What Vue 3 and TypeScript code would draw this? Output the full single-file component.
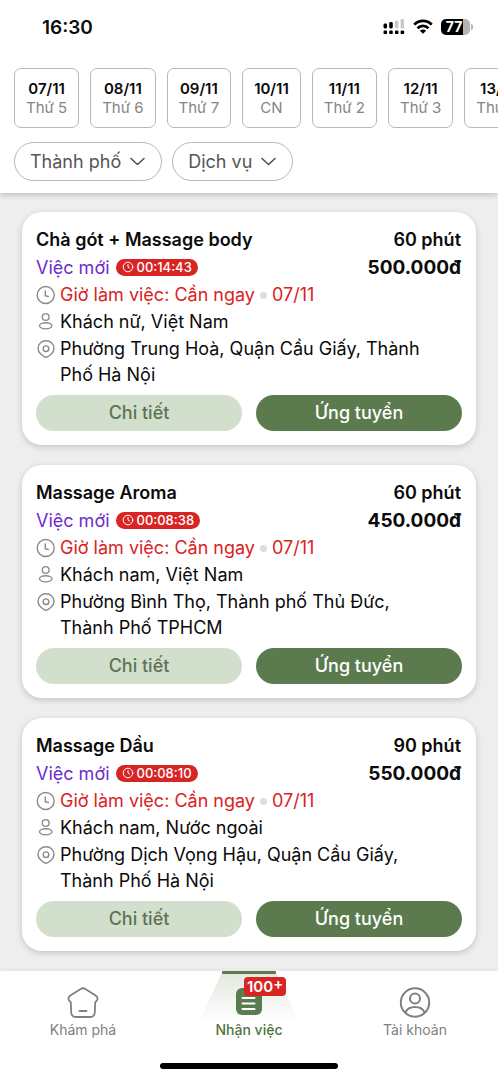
<script setup lang="ts">
interface Day { date: string; label: string }
interface Job {
  title: string
  minutes: string
  price: string
  timer: string
  date: string
  customer: string
  address: string
}

const days: Day[] = [
  { date: '07/11', label: 'Thứ 5' },
  { date: '08/11', label: 'Thứ 6' },
  { date: '09/11', label: 'Thứ 7' },
  { date: '10/11', label: 'CN' },
  { date: '11/11', label: 'Thứ 2' },
  { date: '12/11', label: 'Thứ 3' },
  { date: '13/11', label: 'Thứ 4' },
]

const filters: string[] = ['Thành phố', 'Dịch vụ']

const jobs: Job[] = [
  {
    title: 'Chà gót + Massage body', minutes: '60 phút', price: '500.000đ', timer: '00:14:43', date: '07/11',
    customer: 'Khách nữ, Việt Nam', address: 'Phường Trung Hoà, Quận Cầu Giấy, Thành Phố Hà Nội',
  },
  {
    title: 'Massage Aroma', minutes: '60 phút', price: '450.000đ', timer: '00:08:38', date: '07/11',
    customer: 'Khách nam, Việt Nam', address: 'Phường Bình Thọ, Thành phố Thủ Đức, Thành Phố TPHCM',
  },
  {
    title: 'Massage Dầu', minutes: '90 phút', price: '550.000đ', timer: '00:08:10', date: '07/11',
    customer: 'Khách nam, Nước ngoài', address: 'Phường Dịch Vọng Hậu, Quận Cầu Giấy, Thành Phố Hà Nội',
  },
]
</script>

<template>
  <div class="app">
    <header class="top">
      <div class="status">
        <span class="clock">16:30</span>
        <div class="indicators">
          <svg width="22" height="16" viewBox="0 0 22 16" aria-hidden="true">
            <g fill="#000">
              <rect x="0.5" y="4.5" width="3.6" height="5" rx="1.4" />
              <rect x="6.2" y="3" width="3.6" height="6.5" rx="1.4" />
              <rect x="0.5" y="11.5" width="3.6" height="3.6" rx="1.2" />
              <rect x="6.2" y="11.5" width="3.6" height="3.6" rx="1.2" />
              <rect x="11.9" y="11.5" width="3.6" height="3.6" rx="1.2" />
              <rect x="17.6" y="11.5" width="3.6" height="3.6" rx="1.2" />
            </g>
            <g fill="#c8c8c8">
              <rect x="11.9" y="1.5" width="3.4" height="8" rx="1.2" />
              <rect x="17.6" y="0" width="3.4" height="9.5" rx="1.2" />
            </g>
          </svg>
          <svg width="20" height="16" viewBox="0 0 20 16" aria-hidden="true">
            <g fill="none" stroke="#000" stroke-width="2.7">
              <path d="M1.2 5.6C6.2 .6 13.8 .6 18.8 5.6" />
              <path d="M4.5 9.2C7.7 6.1 12.3 6.1 15.5 9.2" />
            </g>
            <path d="M10 14.8L6.900 11.700C8.700 10 11.300 10 13.100 11.700Z" fill="#000" />
          </svg>
          <div class="battery"><span>77</span></div>
        </div>
      </div>
      <div class="days">
        <button v-for="d in days" :key="d.date" type="button" class="day">
          <strong>{{ d.date }}</strong>
          <span>{{ d.label }}</span>
        </button>
      </div>
      <div class="filters">
        <button v-for="f in filters" :key="f" type="button" class="filter">
          {{ f }}
          <svg width="15" height="9" viewBox="0 0 15 9" aria-hidden="true">
            <path d="M1 1.5L7.5 7.500L14 1.500" fill="none" stroke="#4c4c4c" stroke-width="1.5" stroke-linecap="round" stroke-linejoin="round" />
          </svg>
        </button>
      </div>
    </header>

    <main class="list">
      <article v-for="j in jobs" :key="j.title" class="card">
        <div class="head">
          <h2>{{ j.title }}</h2>
          <span class="minutes">{{ j.minutes }}</span>
        </div>
        <div class="head">
          <div class="state">
            <span class="fresh">Việc mới</span>
            <span class="timer">
              <svg width="12" height="12" viewBox="0 0 12 12" aria-hidden="true">
                <g fill="none" stroke="#fff" stroke-linecap="round"><circle cx="6" cy="6" r="4.8" /><path d="M6 3.5V6L7.500 7" /></g>
              </svg>
              {{ j.timer }}
            </span>
          </div>
          <span class="price">{{ j.price }}</span>
        </div>
        <div class="info">
          <div class="row urgent">
            <svg class="icon" viewBox="0 0 20 20" aria-hidden="true">
              <circle cx="9.7" cy="10" r="8.5" /><path d="M9.3 6V10.800L12.300 11.500" />
            </svg>
            <span>Giờ làm việc: Cần ngay</span><i class="dot"></i><span>{{ j.date }}</span>
          </div>
          <div class="row">
            <svg class="icon" viewBox="0 0 20 20" aria-hidden="true">
              <circle cx="9.7" cy="5" r="3.400" /><ellipse cx="9.700" cy="13.800" rx="6.200" ry="3.100" />
            </svg>
            <span>{{ j.customer }}</span>
          </div>
          <div class="row address">
            <svg class="icon" viewBox="0 0 20 20" aria-hidden="true">
              <path d="M10 18.3C6.500 17 2 13.500 2 9.400C2 4.900 5.500 1.800 10 1.800S18 4.900 18 9.400C18 13.500 13.500 17 10 18.300Z" />
              <circle cx="10" cy="9.700" r="2.800" />
            </svg>
            <span>{{ j.address }}</span>
          </div>
        </div>
        <div class="actions">
          <button type="button" class="btn soft">Chi tiết</button>
          <button type="button" class="btn solid">Ứng tuyển</button>
        </div>
      </article>
    </main>

    <nav class="tabs">
      <div class="tab-row">
        <a href="#explore" class="tab">
          <svg width="32" height="32" viewBox="0 0 32 32" fill="none" stroke="#808080" stroke-width="1.8" aria-hidden="true">
            <path d="M13.6 2.100Q16 .4 18.400 2.100L28.600 8.500Q30.800 10 30.500 12.200Q30.200 13.800 28.800 14.600Q28.200 15 28.200 16L27.800 25.500Q27.500 30 23 30H9Q4.500 30 4.200 25.500L3.800 16Q3.800 15 3.200 14.600Q1.800 13.800 1.500 12.200Q1.200 10 3.400 8.500Z" stroke-linejoin="round" />
            <path d="M12.500 24H19.500" stroke-linecap="round" />
          </svg>
          <span>Khám phá</span>
        </a>
        <a href="#jobs" class="tab active" aria-current="page">
          <svg class="beam" width="100" height="52" viewBox="0 0 100 52" aria-hidden="true">
            <defs><linearGradient id="beam" x1="0" y1="0" x2="0" y2="1"><stop offset="0" stop-color="#5b7b4e" stop-opacity=".18" /><stop offset="1" stop-color="#5b7b4e" stop-opacity="0" /></linearGradient></defs>
            <path d="M23 1H77L100 52H0Z" fill="url(#beam)" />
            <rect x="23" y="0" width="54" height="3" rx="1" fill="#5b7b4e" />
          </svg>
          <span class="glyph">
            <svg width="32" height="32" viewBox="0 0 32 32" aria-hidden="true">
              <rect x="3" y="1" width="26" height="27" rx="6" fill="#5b7b4e" />
              <path d="M9.500 11H21.500M9.500 16.500H21.500M9.500 22H21.500" stroke="#fff" stroke-width="2" stroke-linecap="round" />
            </svg>
            <b class="badge">100<sup>+</sup></b>
          </span>
          <span>Nhận việc</span>
        </a>
        <a href="#account" class="tab">
          <svg width="32" height="32" viewBox="0 0 32 32" fill="none" stroke="#808080" stroke-width="2" aria-hidden="true">
            <circle cx="16" cy="15.500" r="14.200" /><circle cx="16" cy="11.500" r="5" />
            <path d="M6.500 25.500C9 18 23 18 25.500 25.500" />
          </svg>
          <span>Tài khoản</span>
        </a>
      </div>
      <div class="home-bar"></div>
    </nav>
  </div>
</template>

<style>
body { margin: 0; background: #eee; }
</style>

<style scoped>
* { box-sizing: border-box; }
.app {
  display: flex;
  flex-direction: column;
  height: 100vh;
  overflow: hidden;
  background: #eee;
  color: #0b0b0b;
  font-family: Inter, "Noto Sans", sans-serif;
}
button { font-family: inherit; cursor: pointer; }
.top {
  flex: none;
  position: relative;
  padding-bottom: 12px;
  background: #fff;
  box-shadow: 0 2px 6px rgba(0, 0, 0, 0.2);
}
.status {
  display: flex;
  justify-content: space-between;
  align-items: center;
  height: 68px;
  padding: 0 28px 14px 42px;
}
.clock { font-size: 19px; font-weight: 600; }
.indicators { display: flex; align-items: center; gap: 8px; }
.battery {
  position: relative;
  width: 29px;
  height: 16px;
  padding-right: 3px;
  border-radius: 5px;
  background: linear-gradient(90deg, #000 77%, #b4b4b4 77%);
  color: #fff;
  font-size: 14px;
  font-weight: 700;
  line-height: 16px;
  text-align: center;
}
.battery::after {
  content: "";
  position: absolute;
  left: 30px;
  top: 5px;
  width: 2px;
  height: 6px;
  border-radius: 0 2px 2px 0;
  background: #b4b4b4;
}
.days { display: flex; gap: 11px; padding: 0 14px; overflow: hidden; }
.day {
  flex: none;
  display: flex;
  flex-direction: column;
  align-items: center;
  justify-content: center;
  height: 60px;
  padding: 0 11px 1px;
  border: 1px solid #b8b8b8;
  border-radius: 7px;
  background: #fff;
  color: #858585;
  font-size: 15px;
  line-height: 19px;
}
.day strong { color: #0b0b0b; font-weight: 600; }
.filters { display: flex; gap: 10px; padding: 14px 14px 0; }
.filter {
  display: flex;
  align-items: center;
  gap: 9px;
  height: 39px;
  padding: 0 16px 0 15px;
  border: 1px solid #b8b8b8;
  border-radius: 20px;
  background: #fff;
  color: #555;
  font-size: 18px;
}
.list {
  flex: 1;
  min-height: 0;
  overflow: hidden;
  display: flex;
  flex-direction: column;
  gap: 20px;
  padding: 19px 22px 20px;
}
.card {
  flex: none;
  padding: 13px 14px 14px;
  border-radius: 20px;
  background: #fff;
  box-shadow: 0 2px 6px rgba(0, 0, 0, 0.18);
}
.head {
  display: flex;
  align-items: center;
  justify-content: space-between;
  height: 28px;
  padding-right: 1px;
  font-size: 18px;
}
h2 { margin: 0; font-size: 18px; font-weight: 600; }
.minutes { font-weight: 600; }
.price { font-size: 19px; font-weight: 700; }
.state { display: flex; align-items: center; gap: 6px; }
.fresh { color: #6d2bd0; }
.timer {
  display: flex;
  align-items: center;
  gap: 3px;
  height: 17px;
  padding: 0 6px;
  border-radius: 9px;
  background: #d92424;
  color: #fff;
  font-size: 13px;
  font-weight: 500;
}
.info { display: flex; flex-direction: column; gap: 1px; margin-top: 1px; font-size: 18px; line-height: 26px; }
.row { display: flex; }
.address { padding-right: 32px; }
.icon {
  flex: none;
  width: 20px;
  height: 20px;
  margin: 3px 4px 0 0;
  fill: none;
  stroke: #8a8a8a;
  stroke-width: 1.4;
  stroke-linecap: round;
}
.urgent { color: #da2222; }
.dot {
  align-self: center;
  width: 7px;
  height: 7px;
  margin: 0 5px;
  border-radius: 50%;
  background: #dedede;
}
.actions { display: flex; gap: 14px; margin-top: 7px; }
.btn {
  flex: 1;
  height: 36px;
  padding: 0 0 2px;
  border: 0;
  border-radius: 18px;
  font-size: 18px;
  font-weight: 500;
}
.soft { background: #d3dfcd; color: #5b7553; }
.solid { background: #5b7b4e; color: #fff; }
.tabs { flex: none; position: relative; padding-bottom: 10px; background: #fff; box-shadow: 0 -1px 4px rgba(0, 0, 0, 0.05); }
.tab-row { display: flex; height: 92px; }
.tab {
  position: relative;
  flex: 1;
  display: flex;
  flex-direction: column;
  align-items: center;
  gap: 1px;
  padding-top: 16px;
  color: #808080;
  font-size: 14px;
  line-height: 20px;
  text-decoration: none;
}
.active { color: #4f7540; font-weight: 500; }
.beam { position: absolute; top: 0; left: 50%; margin-left: -50px; }
.glyph { position: relative; height: 32px; }
.badge {
  position: absolute;
  left: 11px;
  top: -10px;
  height: 19px;
  padding: 0 3px;
  border-radius: 4px;
  background: #d92424;
  color: #fff;
  font-size: 15px;
  font-weight: 600;
  line-height: 19px;
  white-space: nowrap;
}
.badge sup { font-size: 15px; line-height: 0; vertical-align: 3px; }
.home-bar { width: 178px; height: 6px; margin: 0 auto; border-radius: 3px; background: #000; }
</style>
